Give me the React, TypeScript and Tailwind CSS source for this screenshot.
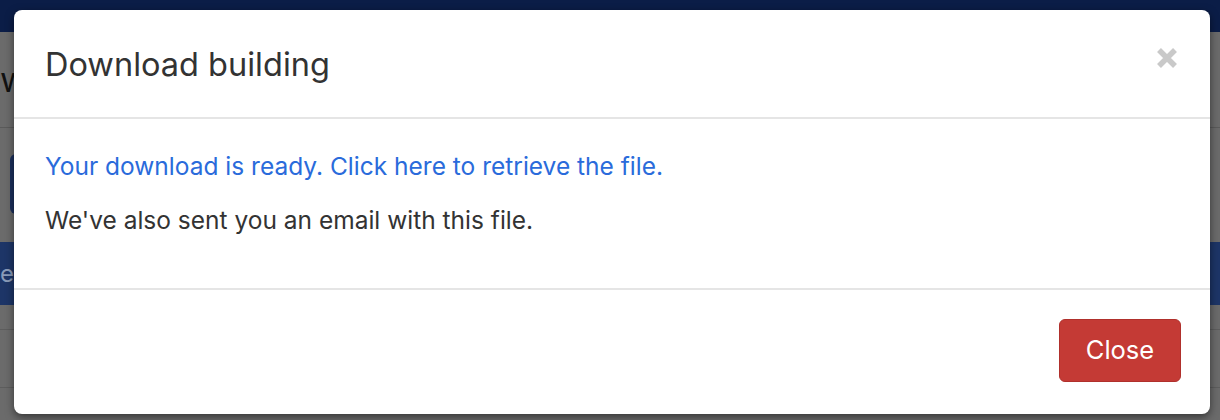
import React from "react";

export default function App() {
  return (
    <div className="relative w-[1220px] h-[420px] overflow-hidden bg-[#6b6b6b]" style={{ fontFamily: "Inter, 'Liberation Sans', sans-serif" }}>
      {/* dimmed page underneath */}
      <div className="flex flex-col">
        <div className="h-[32px] bg-[#0b1d47]" />
        <div className="h-[96px] border-b border-[#5a5a5a] flex items-center overflow-hidden">
          <span className="text-[34px] text-[#111] pl-[0px]">w</span>
        </div>
        <div className="h-[114px] pt-[26px] pl-[10px]">
          <div className="w-[30px] h-[60px] rounded-[6px] bg-[#1b2f5c]" />
        </div>
        <div className="h-[63px] bg-[#1d3567] flex items-center overflow-hidden">
          <span className="text-[24px] text-[#8a9bb8]">er</span>
        </div>
        <div className="h-[25px] border-b border-[#5d5d5d]" />
        <div className="h-[58px] border-b border-[#5d5d5d]" />
      </div>
      {/* modal */}
      <div className="absolute left-[14px] top-[10px] w-[1196px] h-[404px] bg-white rounded-[8px] shadow-[0_3px_9px_rgba(0,0,0,0.5)] flex flex-col">
        <div className="h-[109px] border-b-2 border-[#e5e5e5] flex items-center justify-between pl-[31px] pr-[32px]">
          <h4 className="text-[32.5px] text-[#333] leading-none pt-[4px]">Download building</h4>
          <svg width="22" height="22" viewBox="0 0 22 22" className="mb-[12px]">
            <path d="M3 3 L19 19 M19 3 L3 19" stroke="#c9c9c9" strokeWidth="5.5" strokeLinecap="butt" />
          </svg>
        </div>
        <div className="h-[171px] border-b-2 border-[#e5e5e5] pl-[31px] pt-[33px] flex flex-col gap-[25px]">
          <a className="text-[24.5px] text-[#2a6bdb] leading-[29px]">Your download is ready. Click here to retrieve the file.</a>
          <p className="text-[24.5px] text-[#333] leading-[29px]">We've also sent you an email with this file.</p>
        </div>
        <div className="flex-1 flex justify-end items-start pt-[29px] pr-[29px]">
          <button className="w-[122px] h-[63px] rounded-[6px] bg-[#c43a35] border border-[#b0302c] text-white text-[25.5px]">Close</button>
        </div>
      </div>
    </div>
  );
}
